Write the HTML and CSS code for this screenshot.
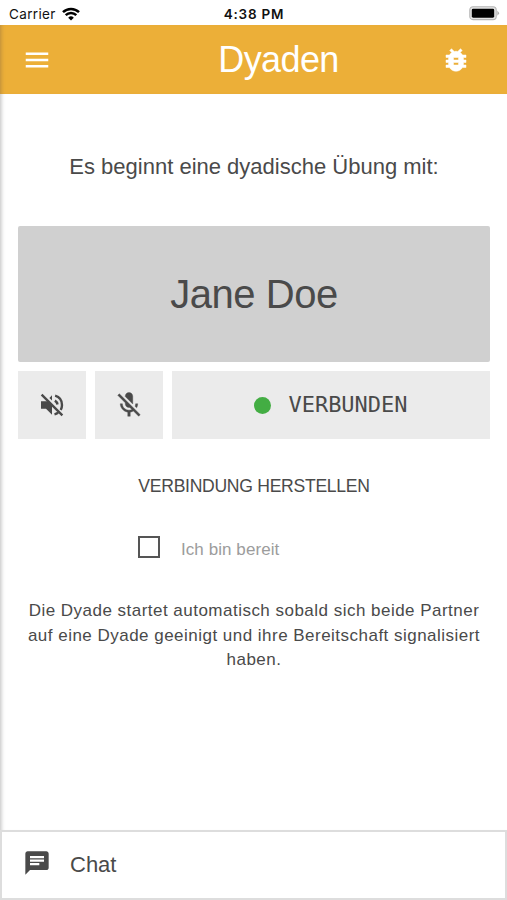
FILE: index.html
```html
<!DOCTYPE html>
<html lang="de">
<head>
<meta charset="utf-8">
<title>Dyaden</title>
<link rel="stylesheet" href="styles.css">
</head>
<body>
<div class="status">
  <div class="carrier"><span>Carrier</span>
    <svg class="wifi" viewBox="0 0 18 14"><path d="M9 13.6 6.2 10.7a4 4 0 0 1 5.6 0z"/><path class="arc" d="M1 5.2a11.4 11.4 0 0 1 16 0M3.7 8.2a7.6 7.6 0 0 1 10.6 0"/></svg>
  </div>
  <span class="time">4:38 PM</span>
  <svg class="battery" viewBox="0 0 31 15"><rect x=".8" y=".8" width="26.4" height="12.8" rx="3.2" fill="#e4e4e4" stroke="#b5b5b5" stroke-width="1.1"/><rect x="2.8" y="2.7" width="22.4" height="9" rx="1.4" fill="#000"/><path d="M28.4 4.6 30.3 7.2 28.4 9.8z" fill="#aaa"/></svg>
</div>
<header class="bar">
  <svg class="icon" viewBox="0 0 24 24"><path d="M3 18h18v-2H3v2zm0-5h18v-2H3v2zm0-7v2h18V6H3z"/></svg>
  <h1>Dyaden</h1>
  <svg class="icon bug" viewBox="0 0 24 24"><path d="M20 8h-2.81c-.45-.78-1.07-1.45-1.82-1.96L17 4.41 15.59 3l-2.17 2.17C12.96 5.06 12.49 5 12 5s-.96.06-1.41.17L8.41 3 7 4.41l1.62 1.63C7.88 6.55 7.26 7.22 6.81 8H4v2h2.09c-.05.33-.09.66-.09 1v1H4v2h2v1c0 .34.04.67.09 1H4v2h2.81c1.04 1.79 2.97 3 5.19 3s4.15-1.21 5.19-3H20v-2h-2.09c.05-.33.09-.66.09-1v-1h2v-2h-2v-1c0-.34-.04-.67-.09-1H20V8zm-6 8h-4v-2h4v2zm0-4h-4v-2h4v2z"/></svg>
</header>
<main>
  <p class="intro">Es beginnt eine dyadische Übung mit:</p>
  <div class="partner">Jane Doe</div>
  <div class="controls">
    <button><svg class="icon" viewBox="0 0 24 24"><path d="M3.2 9H8.5L12 12.5V19.8L7.2 15H3.2zM12 4.2 9.9 6.3 12 8.4z"/><path class="line" d="M3.7 3.7 20.3 20.3M14.5 4.5C17.9 5.5 20 8.5 20 12c0 1.5-.35 2.8-1 4M14.3 8.5c1.1.7 1.9 1.8 2.1 3.1M14 19.5c1.1-.3 2-.7 2.8-1.3"/></svg></button>
    <button><svg class="icon heavy" viewBox="0 0 24 24"><path d="M19 11h-1.7c0 .74-.16 1.43-.43 2.05l1.23 1.23c.56-.98.9-2.09.9-3.28zm-4.02.17c0-.06.02-.11.02-.17V5c0-1.66-1.34-3-3-3S9 3.34 9 5v.18l5.98 5.99zM4.27 3L3 4.27l6.01 6.01V11c0 1.66 1.33 3 2.99 3 .22 0 .44-.03.65-.08l1.66 1.66c-.71.33-1.5.52-2.31.52-2.76 0-5.3-2.1-5.3-5.1H5c0 3.41 2.72 6.23 6 6.72V21h2v-3.28c.91-.13 1.77-.45 2.54-.9L19.73 21 21 19.73 4.27 3z"/></svg></button>
    <div class="state"><i class="dot"></i><span>VERBUNDEN</span></div>
  </div>
  <div class="connect">VERBINDUNG HERSTELLEN</div>
  <label class="ready"><span class="box"></span><span class="ready-text">Ich bin bereit</span></label>
  <p class="hint">Die Dyade startet automatisch sobald sich beide Partner<br>auf eine Dyade geeinigt und ihre Bereitschaft signalisiert<br>haben.</p>
</main>
<footer class="chat">
  <svg class="icon" viewBox="0 0 24 24"><path d="M20 2H4c-1.1 0-1.99.9-1.99 2L2 22l4-4h14c1.1 0 2-.9 2-2V4c0-1.1-.9-2-2-2zM6 9h12v2H6V9zm8 5H6v-2h8v2zm4-6H6V6h12v2z"/></svg>
  <span>Chat</span>
</footer>
</body>
</html>
```

FILE: styles.css
```css
* { box-sizing: border-box; }
body {
  margin: 0;
  height: 900px;
  display: flex;
  flex-direction: column;
  overflow: hidden;
  background: #fff;
  color: #4a4a4a;
  font-family: "Liberation Sans", Arial, sans-serif;
}
p, h1 { margin: 0; font-weight: 400; }
.icon { width: 30px; height: 30px; fill: currentColor; display: block; flex: none; }
.line { fill: none; stroke: currentColor; stroke-width: 1.9; }
.heavy { stroke: currentColor; stroke-width: .3; }
.status {
  height: 25px;
  display: grid;
  grid-template-columns: 1fr auto 1fr;
  align-items: center;
  padding: 2px 7px 0 9px;
  color: #111;
  font: 13.5px Inter, sans-serif;
}
.carrier { display: flex; align-items: center; gap: 6px; letter-spacing: .35px; }
.wifi { width: 18px; height: 14px; }
.wifi .arc { fill: none; stroke: #000; stroke-width: 2.5; }
.time { font-weight: 600; letter-spacing: .8px; margin-left: -1px; }
.battery { width: 31px; height: 15px; justify-self: end; }
.bar {
  height: 69px;
  display: grid;
  grid-template-columns: 30px 1fr 30px;
  align-items: center;
  padding: 0 36px 0 22px;
  color: #fff;
  background: #ecaf38;
  box-shadow: inset 4px 0 4px -3px #b88b3c;
}
.bar h1 { font-size: 36px; letter-spacing: -.6px; padding-left: 64px; text-align: center; }
.bug { stroke: currentColor; stroke-width: .4; }
main {
  flex: 1;
  padding: 0 17px 0 18px;
  text-align: center;
  box-shadow: inset 5px 0 4px -4px #bbb;
}
.intro { padding-top: 60px; height: 132px; font-size: 22px; line-height: 26px; }
.partner {
  height: 136px;
  display: flex;
  align-items: center;
  justify-content: center;
  background: #d0d0d0;
  border-radius: 2px;
  font-size: 40px;
  letter-spacing: -.45px;
}
.controls { display: grid; grid-template-columns: 68px 68px 1fr; gap: 9px; height: 68px; margin-top: 9px; }
.controls button, .state {
  display: flex;
  align-items: center;
  justify-content: center;
  border: 0;
  padding: 0;
  color: inherit;
  background: #ebebeb;
}
.state { gap: 17px; font: 22px "DejaVu Sans Mono", monospace; }
.state span { margin-top: -2px; }
.dot { width: 17px; height: 17px; border-radius: 50%; background: #43ad43; }
.connect { margin-top: 36px; font-size: 17.6px; letter-spacing: -.3px; line-height: 22px; }
.ready { display: flex; align-items: center; gap: 21px; margin: 39px 0 0 120px; color: #9c9c9c; font-size: 17px; letter-spacing: .07px; line-height: 22px; }
.ready-text { padding-top: 3px; margin-bottom: -3px; }
.box { width: 22px; height: 22px; border: 2px solid #555; }
.hint { margin-top: 41px; font-size: 17px; letter-spacing: .48px; line-height: 24.5px; }
.chat {
  height: 70px;
  display: flex;
  align-items: center;
  gap: 19px;
  padding: 0 21px;
  border: 2px solid #ddd;
  font-size: 22px;
}
.chat .icon { width: 28px; height: 28px; margin-top: -5px; }
```
